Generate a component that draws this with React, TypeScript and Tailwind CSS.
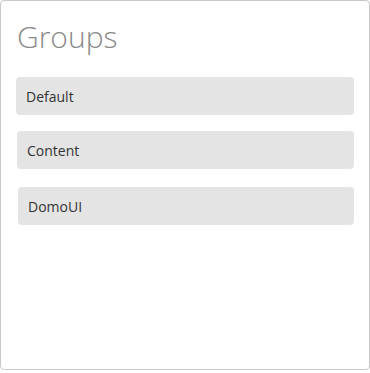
export default function App() {
  const font = { fontFamily: '"Open Sans", "Noto Sans", sans-serif' };
  return (
    <div className="w-[370px] h-[373px] bg-white" style={font}>
      <div className="w-[370px] h-[370px] border border-[#c8c8c8] rounded-[4px] bg-white pt-[15px] pl-[15px] pr-[15px]">
        <h1 className="text-[30px] font-light leading-[41px] text-[#8a8a8a] ml-[1px]">Groups</h1>
        <div className="flex flex-col mt-[20px]">
          <div className="h-[38px] ml-0 w-[338px] rounded-[4px] bg-[#e4e4e4] flex items-center pl-[10px] text-[14px] text-[#333]">Default</div>
          <div className="h-[38px] ml-[1px] w-[337px] mt-[16px] rounded-[4px] bg-[#e4e4e4] flex items-center pl-[10px] text-[14px] text-[#333]">Content</div>
          <div className="h-[38px] ml-[2px] w-[336px] mt-[18px] rounded-[4px] bg-[#e4e4e4] flex items-center pl-[10px] text-[14px] text-[#333]">DomoUI</div>
        </div>
      </div>
    </div>
  );
}
